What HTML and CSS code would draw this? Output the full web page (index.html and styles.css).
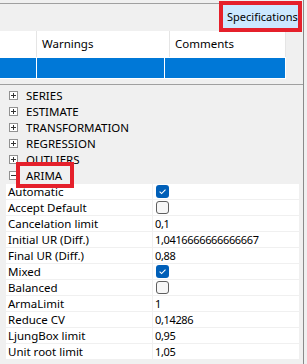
FILE: index.html
```html
<!DOCTYPE html>
<html lang="en">
<head>
    <meta charset="UTF-8">
    <meta name="viewport" content="width=device-width, initial-scale=1.0">
    <title>Specifications</title>
    <link rel="stylesheet" href="styles.css">
</head>
<body>
    <div id="window">
        <!-- Toolbar -->
        <div class="toolbar">
            <div class="tab-line"></div>
            <button class="spec-btn">Specifications</button>
        </div>

        <!-- Results grid -->
        <div class="results">
            <div class="results-head">
                <div class="cell c1"></div>
                <div class="cell c2">Warnings</div>
                <div class="cell c3">Comments</div>
            </div>
            <div class="results-row">
                <div class="cell c1"></div>
                <div class="cell c2"></div>
                <div class="cell c3"></div>
            </div>
        </div>

        <!-- Spec tree -->
        <div class="tree">
            <div class="node">
                <svg class="expander" width="9" height="9" viewBox="0 0 9 9"><rect x="0.5" y="0.5" width="8" height="8" fill="#fff" stroke="#919191"/><path d="M2 4.5H7M4.5 2V7" stroke="#333" stroke-width="1"/></svg>
                <span>SERIES</span>
            </div>
            <div class="node">
                <svg class="expander" width="9" height="9" viewBox="0 0 9 9"><rect x="0.5" y="0.5" width="8" height="8" fill="#fff" stroke="#919191"/><path d="M2 4.5H7M4.5 2V7" stroke="#333" stroke-width="1"/></svg>
                <span>ESTIMATE</span>
            </div>
            <div class="node">
                <svg class="expander" width="9" height="9" viewBox="0 0 9 9"><rect x="0.5" y="0.5" width="8" height="8" fill="#fff" stroke="#919191"/><path d="M2 4.5H7M4.5 2V7" stroke="#333" stroke-width="1"/></svg>
                <span>TRANSFORMATION</span>
            </div>
            <div class="node">
                <svg class="expander" width="9" height="9" viewBox="0 0 9 9"><rect x="0.5" y="0.5" width="8" height="8" fill="#fff" stroke="#919191"/><path d="M2 4.5H7M4.5 2V7" stroke="#333" stroke-width="1"/></svg>
                <span>REGRESSION</span>
            </div>
            <div class="node">
                <svg class="expander" width="9" height="9" viewBox="0 0 9 9"><rect x="0.5" y="0.5" width="8" height="8" fill="#fff" stroke="#919191"/><path d="M2 4.5H7M4.5 2V7" stroke="#333" stroke-width="1"/></svg>
                <span>OUTLIERS</span>
            </div>
            <div class="node">
                <svg class="expander" width="9" height="9" viewBox="0 0 9 9"><rect x="0.5" y="0.5" width="8" height="8" fill="#fff" stroke="#919191"/><path d="M2 4.5H7" stroke="#333" stroke-width="1"/></svg>
                <span class="marked">ARIMA</span>
            </div>
        </div>

        <!-- Property grid -->
        <div class="props">
            <div class="prop-row"><div class="prop-name">Automatic</div><div class="prop-value"><span class="check on"><svg width="13" height="13" viewBox="0 0 13 13"><path d="M3.6 6.7L5.6 8.6L9.5 4.6" fill="none" stroke="#fff" stroke-width="1.1"/></svg></span></div></div>
            <div class="prop-row"><div class="prop-name">Accept Default</div><div class="prop-value"><span class="check"></span></div></div>
            <div class="prop-row"><div class="prop-name">Cancelation limit</div><div class="prop-value">0,1</div></div>
            <div class="prop-row"><div class="prop-name">Initial UR (Diff.)</div><div class="prop-value">1,0416666666666667</div></div>
            <div class="prop-row"><div class="prop-name">Final UR (Diff.)</div><div class="prop-value">0,88</div></div>
            <div class="prop-row"><div class="prop-name">Mixed</div><div class="prop-value"><span class="check on"><svg width="13" height="13" viewBox="0 0 13 13"><path d="M3.6 6.7L5.6 8.6L9.5 4.6" fill="none" stroke="#fff" stroke-width="1.1"/></svg></span></div></div>
            <div class="prop-row"><div class="prop-name">Balanced</div><div class="prop-value"><span class="check"></span></div></div>
            <div class="prop-row"><div class="prop-name">ArmaLimit</div><div class="prop-value">1</div></div>
            <div class="prop-row"><div class="prop-name">Reduce CV</div><div class="prop-value">0,14286</div></div>
            <div class="prop-row"><div class="prop-name">LjungBox limit</div><div class="prop-value">0,95</div></div>
            <div class="prop-row"><div class="prop-name">Unit root limit</div><div class="prop-value">1,05</div></div>
        </div>
    </div>
</body>
</html>
```

FILE: styles.css
```css
body {
    margin: 0;
    background-color: #f0f0f0;
    font-family: "Noto Sans", sans-serif;
    font-size: 11.5px;
    color: #000;
}

#window {
    width: 303px;
    height: 364px;
    border-right: 1px solid #8a8a8a;
}

.toolbar {
    display: flex;
    height: 31px;
}

.tab-line {
    flex: 1;
    margin-top: 3px;
    border-top: 1px solid #a0a0a0;
}

.spec-btn {
    position: relative;
    z-index: 1;
    width: 83px;
    height: 31px;
    margin: 1px 1px 0 0;
    padding: 0 0 0 4px;
    border: 4px solid #e5202b;
    background-color: #cce8ff;
    font-family: inherit;
    font-size: 11px;
    text-align: left;
    color: #000;
}

.results {
    height: 53px;
    border-bottom: 1px solid #a0a0a0;
}

.results-head,
.results-row {
    display: flex;
    width: 286px;
}

.results-head {
    height: 26px;
    background-color: #fff;
}

.results-head .cell {
    line-height: 26px;
    padding-left: 5px;
    border-right: 1px solid #e5e5e5;
}

.results-row {
    height: 20px;
    border-top: 1px solid #fff;
    border-bottom: 1px solid #fff;
}

.results-row .cell {
    background-color: #0078d7;
    border-right: 1px solid #fff;
}

.cell.c1 {
    width: 36px;
    padding-left: 0;
}

.cell.c2 {
    width: 127px;
}

.cell.c3 {
    flex: 1;
}

.results-head .cell.c1 {
    padding-left: 0;
}

.tree {
    padding: 2px 0 1px;
}

.node {
    display: flex;
    align-items: center;
    height: 16px;
    padding-left: 9px;
}

.expander {
    margin-right: 8px;
}

.marked {
    position: relative;
}

.marked::after {
    content: "";
    position: absolute;
    left: -10px;
    right: -12px;
    top: -6px;
    bottom: -5px;
    border: 4px solid #e5202b;
}

.props {
    margin-left: 6px;
    width: 293px;
    background-color: #fff;
}

.prop-row {
    display: flex;
    height: 15px;
    line-height: 15px;
    border-bottom: 1px solid #f0f0f0;
}

.prop-name {
    width: 144px;
    padding-left: 2px;
    border-right: 1px solid #f0f0f0;
}

.prop-value {
    padding-left: 2px;
    display: flex;
    align-items: center;
    font-size: 11px;
    letter-spacing: -0.35px;
}

.check {
    display: block;
    box-sizing: border-box;
    width: 13px;
    height: 13px;
    margin-left: 1px;
    border: 1px solid #5f5f5f;
    border-radius: 3px;
    background-color: #f7f7f7;
}

.check.on {
    border: none;
    background-color: #005fb8;
}

.check svg {
    display: block;
}
```
